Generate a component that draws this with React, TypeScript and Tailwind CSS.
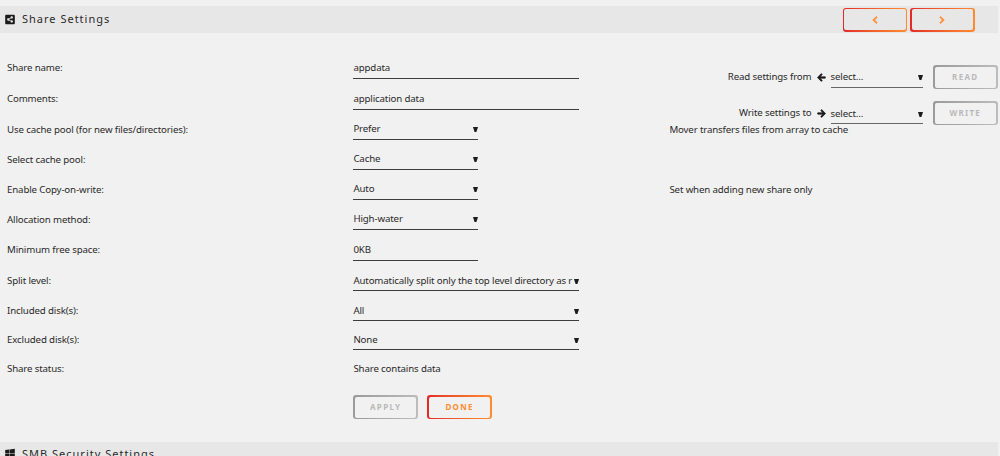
import type { ReactNode } from 'react';
import { FaArrowLeft, FaArrowRight, FaChevronLeft, FaChevronRight, FaShareAltSquare, FaWindows } from 'react-icons/fa';
import clsx from 'clsx';

type Setting = {
  label: string
  value: string
  kind: 'input' | 'select'
  wide?: boolean
  row: string
}

const settings: Setting[] = [
  { label: 'Share name:', value: 'appdata', kind: 'input', wide: true, row: 'h-[31px]' },
  { label: 'Comments:', value: 'application data', kind: 'input', wide: true, row: 'h-[31px]' },
  { label: 'Use cache pool (for new files/directories):', value: 'Prefer', kind: 'select', row: 'h-[30px]' },
  { label: 'Select cache pool:', value: 'Cache', kind: 'select', row: 'h-[30px]' },
  { label: 'Enable Copy-on-write:', value: 'Auto', kind: 'select', row: 'h-[30px]' },
  { label: 'Allocation method:', value: 'High-water', kind: 'select', row: 'h-[30px]' },
  { label: 'Minimum free space:', value: '0KB', kind: 'input', row: 'h-[31px]' },
  { label: 'Split level:', value: 'Automatically split only the top level directory as r', kind: 'select', wide: true, row: 'h-[30px]' },
  { label: 'Included disk(s):', value: 'All', kind: 'select', wide: true, row: 'h-[30px]' },
  { label: 'Excluded disk(s):', value: 'None', kind: 'select', wide: true, row: 'h-[29px]' },
];

type ButtonProps = {
  children: ReactNode
  disabled?: boolean
  fill?: string
}

const Button = ({ children, disabled, fill = 'bg-[#f1f1f1]' }: ButtonProps) => (
  <button
    disabled={disabled}
    className={clsx(
      'h-6 w-[64.5px] shrink-0 rounded-[3px] bg-linear-to-r p-[1.5px] text-[8px] font-bold tracking-[1.3px]',
      disabled ? 'from-[#9a9a9a] to-[#bcbcbc] text-[#b9b9b9]' : 'from-[#e22828] to-[#ff8c2f] text-[#ff8c2f]',
    )}
  >
    <span className={clsx('flex h-full items-center justify-center rounded-[2px]', fill)}>{children}</span>
  </button>
);

type FieldProps = {
  value: string
  kind: 'input' | 'select'
  className?: string
}

const Field = ({ value, kind, className }: FieldProps) => (
  <div className={clsx('flex items-center border-b', className)}>
    <span className="flex-1 whitespace-nowrap">{value}</span>
    {kind === 'select' && (
      <svg viewBox="0 0 5 5" className="h-[5px] w-[5px] shrink-0 fill-[#1c1b1b]">
        <path d="M0 0h5L3.4 5H1.6z" />
      </svg>
    )}
  </div>
);

const App = () => {
  return (
    <div className="h-[456px] overflow-hidden bg-[#f1f1f1] pt-1.5 font-['Noto_Sans',sans-serif] text-[9.7px] leading-[14px] tracking-[-0.14px] text-[#2b2a29]">
      <div className="mr-0.5 flex h-[27px] items-center bg-[#e7e7e7] pl-[5px]">
        <FaShareAltSquare className="h-[11px] w-[10px] text-[#1c1b1b]" />
        <h2 className="ml-[7px] flex-1 pb-px text-[11px] tracking-[1px]">Share Settings</h2>
        <div className="mr-[23.5px] flex gap-[3px]">
          <Button fill="bg-[#e7e7e7]"><FaChevronLeft className="h-2 w-2 stroke-current stroke-[50]" /></Button>
          <Button fill="bg-[#e7e7e7]"><FaChevronRight className="h-2 w-2 stroke-current stroke-[50]" /></Button>
        </div>
      </div>

      <div className="flex h-[409px]">
        <div className="w-[669.4px] pl-[7px] pt-[15px]">
          {settings.map((s) => (
            <div key={s.label} className={clsx('flex items-end', s.row)}>
              <label className={clsx('w-[346.4px]', s.kind === 'select' ? 'pb-[3.5px]' : 'pb-[4.5px]')}>{s.label}</label>
              <Field
                value={s.value}
                kind={s.kind}
                className={clsx(
                  'border-[#3c3c3c]',
                  s.wide ? 'w-[226px]' : 'w-[125px]',
                  s.wide && s.kind === 'select' ? 'pb-[2px]' : 'pb-[3px]',
                )}
              />
            </div>
          ))}
          <div className="flex h-[26px] items-end">
            <span className="w-[346.4px]">Share status:</span>
            <span>Share contains data</span>
          </div>
          <div className="ml-[346.4px] mt-[19px] flex gap-[9.5px]">
            <Button disabled>APPLY</Button>
            <Button>DONE</Button>
          </div>
        </div>

        <div className="flex-1 pr-[2.5px] pt-8">
          <div className="flex h-6 items-center justify-end">
            <span>Read settings from</span>
            <FaArrowLeft className="mx-[5px] h-[9px] w-[9px] stroke-current stroke-[40] text-[#1c1b1b]" />
            <Field value="select..." kind="select" className="w-[92.5px] border-[#666] pb-[3px] pt-1" />
            <div className="ml-2.5 flex"><Button disabled>READ</Button></div>
          </div>
          <div className="mt-3 flex h-6 items-center justify-end">
            <span>Write settings to</span>
            <FaArrowRight className="mx-[5px] h-[9px] w-[9px] stroke-current stroke-[40] text-[#1c1b1b]" />
            <Field value="select..." kind="select" className="w-[92.5px] border-[#666] pb-[2px] pt-[5px]" />
            <div className="ml-2.5 flex"><Button disabled>WRITE</Button></div>
          </div>
          <p className="-mt-[2.5px]">Mover transfers files from array to cache</p>
          <p className="mt-[46px]">Set when adding new share only</p>
        </div>
      </div>

      <div className="mr-0.5 flex h-[27px] items-center bg-[#e7e7e7] pb-1 pl-[5px]">
        <FaWindows className="h-[11px] w-[10px] text-[#1c1b1b]" />
        <h2 className="ml-[7px] text-[11px] tracking-[1px]">SMB Security Settings</h2>
      </div>
    </div>
  );
};

export default App;
